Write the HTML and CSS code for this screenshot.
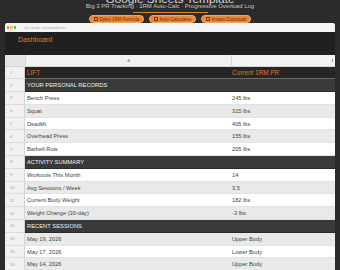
FILE: index.html
```html
<!DOCTYPE html>
<html lang="en">
<head>
    <meta charset="UTF-8">
    <meta name="viewport" content="width=device-width, initial-scale=1.0">
    <title>Gym Tracker - Google Sheets Template</title>
    <link rel="stylesheet" href="styles.css">
</head>
<body>

    <div class="hero">
        <h1 class="title"><span>Google Sheets Template</span></h1>
        <p class="subtitle">Big 3 PR Tracking &middot; 1RM Auto-Calc &middot; Progressive Overload Log</p>
        <div class="rule"></div>
        <div class="badges">
            <span class="badge"><i class="box"></i>Epley 1RM Formula</span>
            <span class="badge"><i class="box"></i>Auto-Calculates</span>
            <span class="badge"><i class="box"></i>Instant Download</span>
        </div>
    </div>

    <div class="window">
        <div class="chrome">
            <span class="dot red"></span>
            <span class="dot yellow"></span>
            <span class="dot green"></span>
            <span class="url">docs.google.com/spreadsheets</span>
        </div>
        <div class="sheet-title">Dashboard</div>

        <div class="sheet">
            <div class="corner"></div>
            <div class="col-head">A</div>
            <div class="col-head col-b"><span class="scroll"></span></div>

            <div class="num">1</div>
            <div class="cell head">LIFT</div>
            <div class="cell head val">Current 1RM PR</div>

            <div class="num">2</div>
            <div class="cell section">YOUR PERSONAL RECORDS</div>
            <div class="cell section"></div>

            <div class="num">3</div>
            <div class="cell">Bench Press</div>
            <div class="cell val">245 lbs</div>

            <div class="num">4</div>
            <div class="cell alt">Squat</div>
            <div class="cell alt val">315 lbs</div>

            <div class="num">5</div>
            <div class="cell">Deadlift</div>
            <div class="cell val">405 lbs</div>

            <div class="num">6</div>
            <div class="cell alt">Overhead Press</div>
            <div class="cell alt val">155 lbs</div>

            <div class="num">7</div>
            <div class="cell">Barbell Row</div>
            <div class="cell val">205 lbs</div>

            <div class="num">8</div>
            <div class="cell section">ACTIVITY SUMMARY</div>
            <div class="cell section"></div>

            <div class="num">9</div>
            <div class="cell">Workouts This Month</div>
            <div class="cell val">14</div>

            <div class="num">10</div>
            <div class="cell alt">Avg Sessions / Week</div>
            <div class="cell alt val">3.5</div>

            <div class="num">11</div>
            <div class="cell">Current Body Weight</div>
            <div class="cell val">182 lbs</div>

            <div class="num">12</div>
            <div class="cell alt">Weight Change (30-day)</div>
            <div class="cell alt val">-3 lbs</div>

            <div class="num">13</div>
            <div class="cell section">RECENT SESSIONS</div>
            <div class="cell section"></div>

            <div class="num">14</div>
            <div class="cell alt">May 19, 2026</div>
            <div class="cell alt val">Upper Body</div>

            <div class="num">15</div>
            <div class="cell">May 17, 2026</div>
            <div class="cell val">Lower Body</div>

            <div class="num">16</div>
            <div class="cell alt">May 14, 2026</div>
            <div class="cell alt val">Upper Body</div>
        </div>
    </div>

</body>
</html>
```

FILE: styles.css
```css
body {
    font-family: "Liberation Sans", Arial, sans-serif;
    margin: 0;
    background-color: #2b2b2b;
    color: #ccc;
    overflow: hidden;
}
.hero {
    text-align: center;
}
/* only the bottom of the big heading is still on screen */
.title {
    display: flex;
    justify-content: center;
    align-items: flex-end;
    height: 4.5px;
    margin: 0;
    overflow: hidden;
    font-size: 11.8px;
    font-weight: normal;
    line-height: 12px;
    color: #d8d8d8;
}
.title span {
    flex: none;
    margin-bottom: -0.5px;
}
.subtitle {
    font-size: 6px;
    line-height: 7px;
    margin: -1.5px 0 0;
    color: #c8c8c8;
}
.rule {
    width: 75px;
    height: 1px;
    margin: 2px auto 0;
    background: #e0822c;
}
.badges {
    display: flex;
    justify-content: center;
    gap: 4.5px;
    margin-top: 2px;
}
.badge {
    display: flex;
    align-items: center;
    gap: 1.5px;
    height: 8px;
    padding: 0 4px;
    box-sizing: border-box;
    border-radius: 4px;
    background: #e8883a;
    border: 0.5px solid #f3a560;
    color: #6a3208;
    font-size: 4.5px;
    white-space: nowrap;
}
.box {
    display: inline-block;
    width: 2.2px;
    height: 2.6px;
    border: 0.5px solid #7a3a0c;
}
.window {
    margin: 0 5px;
    background: #202020;
}
.chrome {
    display: flex;
    align-items: center;
    gap: 1px;
    height: 9px;
    padding-left: 2px;
    background: #f4f4f4;
    border-radius: 2px 2px 0 0;
}
.dot {
    width: 2.4px;
    height: 2.4px;
    border-radius: 50%;
}
.red { background: #ff5f57; }
.yellow { background: #febc2e; }
.green { background: #28c840; }
.url {
    margin-left: 7px;
    font-size: 3px;
    color: #aaa;
}
.sheet-title {
    height: 22.5px;
    padding: 3px 0 0 13px;
    box-sizing: border-box;
    font-size: 7px;
    line-height: 10px;
    color: #e07b2a;
}
.sheet {
    display: grid;
    grid-template-columns: 20px 206px 1fr;
    grid-template-rows: 12px;
    grid-auto-rows: 12.8px;
}
.corner {
    background: #e6e6e6;
    border-bottom: 1px solid #d4d4d4;
}
.col-head {
    display: flex;
    align-items: center;
    justify-content: center;
    background: #f2f2f2;
    border-left: 1px solid #d8d8d8;
    border-bottom: 1px solid #d4d4d4;
    font-size: 4px;
    color: #777;
}
.col-b {
    justify-content: flex-end;
    padding-right: 2px;
}
.scroll {
    width: 1px;
    height: 3px;
    background: #999;
}
.num {
    display: flex;
    align-items: center;
    padding-left: 5px;
    background: #f1f1f1;
    border-bottom: 1px solid #dcdcdc;
    border-right: 1px solid #d4d4d4;
    font-size: 4px;
    color: #999;
}
.cell {
    display: flex;
    align-items: center;
    padding-left: 2px;
    box-sizing: border-box;
    background: #fff;
    border-bottom: 1px solid #e2e2e2;
    font-size: 5.7px;
    color: #444;
    white-space: nowrap;
}
.val {
    padding-left: 1px;
}
.alt {
    background: #e9e9e9;
}
.head {
    background: #262626;
    border-bottom: 1px solid #6a6a6a;
    font-size: 6.4px;
    color: #dc7a2c;
}
.section {
    background: #3a3a3a;
    border-bottom: 1px solid #2a2a2a;
    font-size: 5.8px;
    color: #f2f2f2;
}
```
